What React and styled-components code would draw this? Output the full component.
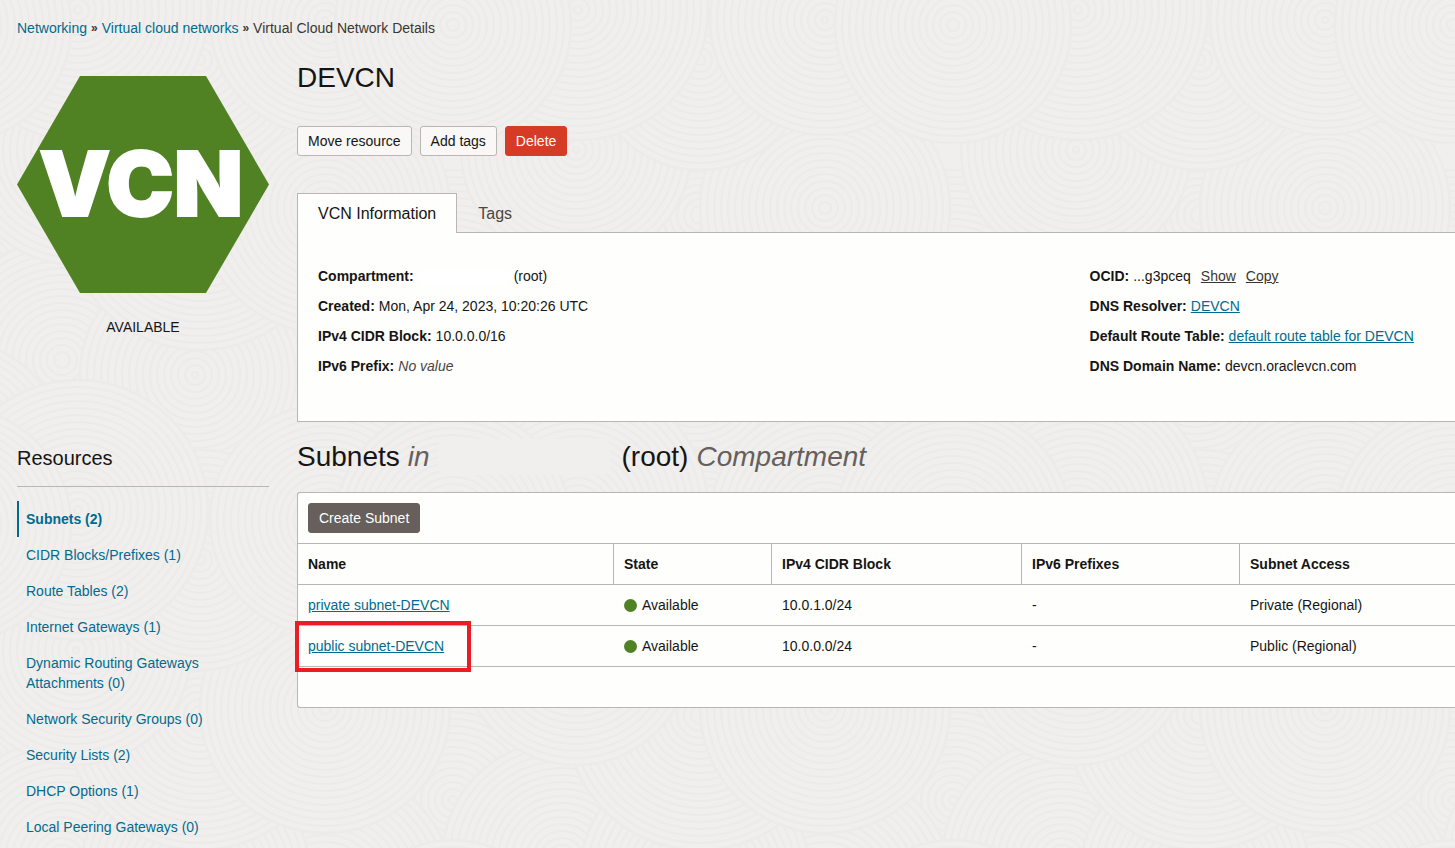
import React from 'react';
import styled, { createGlobalStyle } from 'styled-components';

const color = {
  page: '#f0efed',
  groove: '#ecebe9',
  panel: '#fefefc',
  line: '#bab6b1',
  text: '#161513',
  muted: '#665f5b',
  link: '#006b8f',
  green: '#508223',
};

/* Sand-garden texture: overlapping discs of concentric grooves, tiled every 500px. */
const TILE = 500;
const discs = [
  [453, 300, 130], [325, 395, 130], [62, 360, 120], [195, 375, 115],
  [453, 450, 110], [200, 215, 135], [325, 208, 125], [76, 150, 115],
  [200, 60, 110], [325, 20, 115], [78, 10, 130], [453, 25, 118],
];

function grooves([cx, cy, r]) {
  let out = '';
  for (const dx of [-TILE, 0, TILE]) {
    for (const dy of [-TILE, 0, TILE]) {
      const x = cx + dx;
      const y = cy + dy;
      if (x + r < 0 || x - r > TILE || y + r < 0 || y - r > TILE) continue;
      out += `<circle cx="${x}" cy="${y}" r="${r}" fill="${color.page}"/>`;
      for (let ring = r; ring > 2; ring -= 7) {
        out += `<circle cx="${x}" cy="${y}" r="${ring}"/>`;
      }
    }
  }
  return out;
}

const texture = `url("data:image/svg+xml,${encodeURIComponent(
  `<svg xmlns="http://www.w3.org/2000/svg" width="${TILE}" height="${TILE}"><g fill="none" stroke="${color.groove}" stroke-width="2">${discs
    .map(grooves)
    .join('')}</g></svg>`
).replace(/'/g, '%27')}")`;

const GlobalStyle = createGlobalStyle`
  *, *::before, *::after { box-sizing: border-box; }
  body {
    margin: 0;
    background-color: ${color.page};
    background-image: ${texture};
    color: ${color.text};
    font: 14px/20px "Liberation Sans", Arial, sans-serif;
  }
`;

const Page = styled.div`
  padding: 18px 0 0 17px;
`;

const Breadcrumb = styled.nav`
  display: flex;
  gap: 4px;
  color: #3a3632;
`;

const Crumb = styled.a`
  color: ${color.link};
  text-decoration: none;
`;

const Separator = styled.span`
  font-size: 12px;
  font-weight: bold;
`;

const Columns = styled.div`
  display: grid;
  grid-template-columns: 252px minmax(0, 1fr);
  column-gap: 28px;
  margin-top: ${(p) => p.$top}px;
`;

const Status = styled.aside`
  padding-top: 16px;
  text-align: center;
`;

const Hexagon = styled.svg`
  display: block;
  width: 100%;
  margin-bottom: 24px;
`;

const Title = styled.h1`
  margin: 0 0 30px;
  font-size: 28px;
  line-height: 36px;
  font-weight: normal;
`;

const Actions = styled.div`
  display: flex;
  gap: 8px;
`;

const looks = {
  plain: `background: #f9f8f7; color: ${color.text}; border-color: ${color.line};`,
  danger: 'background: #d63b25; color: #fff; border-color: #d63b25;',
  solid: `background: ${color.muted}; color: #fff; border-color: ${color.muted};`,
};

const Button = styled.button`
  height: 30px;
  padding: 0 10px;
  border: 1px solid;
  border-radius: 3px;
  font: inherit;
  ${(p) => looks[p.$look]}
`;

const TabBar = styled.div`
  display: flex;
  margin-top: 37px;
`;

const Tab = styled.button`
  height: 40px;
  margin-bottom: -1px;
  padding: 0 20px;
  border: 1px solid ${(p) => (p.$active ? color.line : 'transparent')};
  border-bottom: 0;
  background: ${(p) => (p.$active ? color.panel : 'transparent')};
  color: ${(p) => (p.$active ? color.text : '#4a4541')};
  font: inherit;
  font-size: 16px;
  position: relative;
`;

const InfoPanel = styled.section`
  display: grid;
  grid-template-columns: 19fr 9fr;
  padding: 28px 0 40px 20px;
  border: 1px solid ${color.line};
  border-right: 0;
  background: ${color.panel};
`;

const Fields = styled.dl`
  margin: 0;
  line-height: 30px;
`;

const Field = styled.div`
  display: flex;
  gap: 4px;
  white-space: nowrap;

  dt { font-weight: bold; }
  dd { margin: 0; }
`;

const Link = styled.a`
  color: ${(p) => (p.$quiet ? '#3a3632' : color.link)};
  text-decoration: underline;
  text-underline-offset: 1px;
  margin-left: ${(p) => (p.$quiet ? 10 : 0)}px;
`;

const NoValue = styled.em`
  color: #4a4541;
`;

const Redacted = styled.span`
  display: inline-block;
  width: ${(p) => p.$width}px;
  height: ${(p) => p.$height}px;
  margin-right: 4px;
  border-radius: 8px;
  background: ${(p) => p.$fill};
  vertical-align: middle;
`;

const SideHeading = styled.h2`
  margin: 0 0 14px;
  padding: 8px 0 14px;
  border-bottom: 1px solid ${color.line};
  font-size: 20px;
  line-height: 28px;
  font-weight: normal;
`;

const ResourceList = styled.ul`
  margin: 0;
  padding: 0;
  list-style: none;
`;

const ResourceLink = styled.a`
  display: block;
  padding: 8px 50px 8px 7px;
  border-left: 2px solid ${(p) => (p.$active ? color.link : 'transparent')};
  color: ${color.link};
  font-weight: ${(p) => (p.$active ? 'bold' : 'normal')};
  text-decoration: none;
`;

const SectionHeading = styled.h2`
  display: flex;
  align-items: center;
  gap: 8px;
  margin: 0;
  height: 56px;
  padding-bottom: 14px;
  font-size: 28px;
  line-height: 36px;
  font-weight: normal;
  white-space: nowrap;

  em { color: ${color.muted}; }
`;

const TablePanel = styled.section`
  border: 1px solid ${color.line};
  border-right: 0;
  border-radius: 3px 0 0 3px;
  background: ${color.panel};
  padding-bottom: 40px;
`;

const Toolbar = styled.div`
  padding: 10px;
  border-bottom: 1px solid ${color.line};
`;

const Table = styled.table`
  width: 100%;
  table-layout: fixed;
  border-collapse: separate;
  border-spacing: 0;
  text-align: left;
`;

const Column = styled.col`
  width: ${(p) => (p.$width ? `${p.$width}px` : 'auto')};
`;

const HeadCell = styled.th`
  height: 41px;
  padding: 0 10px;
  border-bottom: 1px solid ${color.line};

  & + & { border-left: 1px solid ${color.line}; }
`;

const Cell = styled.td`
  position: relative;
  height: 41px;
  padding: 0 10px;
  border-bottom: 1px solid ${color.line};

  & + & { padding-left: 11px; }
`;

const Highlight = styled.span`
  position: absolute;
  top: -5px;
  left: -3px;
  width: 176px;
  height: 51px;
  border: 4px solid #ed1c24;
  pointer-events: none;
`;

const State = styled.span`
  display: flex;
  align-items: center;
  gap: 5px;

  &::before {
    content: '';
    width: 13px;
    height: 13px;
    border-radius: 50%;
    background: ${color.green};
  }
`;

const resources = [
  'Subnets (2)',
  'CIDR Blocks/Prefixes (1)',
  'Route Tables (2)',
  'Internet Gateways (1)',
  'Dynamic Routing Gateways Attachments (0)',
  'Network Security Groups (0)',
  'Security Lists (2)',
  'DHCP Options (1)',
  'Local Peering Gateways (0)',
];

const headers = [
  ['Name', 315],
  ['State', 158],
  ['IPv4 CIDR Block', 250],
  ['IPv6 Prefixes', 218],
  ['Subnet Access', null],
];

const subnets = [
  { name: 'private subnet-DEVCN', cidr: '10.0.1.0/24', access: 'Private (Regional)' },
  { name: 'public subnet-DEVCN', cidr: '10.0.0.0/24', access: 'Public (Regional)', marked: true },
];

export default function App() {
  return (
    <Page>
      <GlobalStyle />
      <Breadcrumb aria-label="Breadcrumb">
        <Crumb href="#networking">Networking</Crumb>
        <Separator>»</Separator>
        <Crumb href="#vcns">Virtual cloud networks</Crumb>
        <Separator>»</Separator>
        <span>Virtual Cloud Network Details</span>
      </Breadcrumb>

      <Columns $top={22}>
        <Status>
          <Hexagon viewBox="0 0 252 217" role="img" aria-label="VCN">
            <path d="M63 0H189L252 108.500L189 217H63L0 108.500Z" fill={color.green} />
            <text
              x="124"
              y="140"
              textAnchor="middle"
              fill="#fff"
              stroke="#fff"
              strokeWidth="2"
              fontFamily="Inter, sans-serif"
              fontWeight="900"
              fontSize="90"
            >
              VCN
            </text>
          </Hexagon>
          AVAILABLE
        </Status>
        <main>
          <Title>DEVCN</Title>
          <Actions>
            <Button $look="plain">Move resource</Button>
            <Button $look="plain">Add tags</Button>
            <Button $look="danger">Delete</Button>
          </Actions>
          <TabBar role="tablist">
            <Tab role="tab" aria-selected="true" $active>VCN Information</Tab>
            <Tab role="tab" aria-selected="false">Tags</Tab>
          </TabBar>
          <InfoPanel>
            <Fields>
              <Field>
                <dt>Compartment:</dt>
                <dd><Redacted $width={92} $height={18} $fill="#ffffff" />(root)</dd>
              </Field>
              <Field><dt>Created:</dt><dd>Mon, Apr 24, 2023, 10:20:26 UTC</dd></Field>
              <Field><dt>IPv4 CIDR Block:</dt><dd>10.0.0.0/16</dd></Field>
              <Field><dt>IPv6 Prefix:</dt><dd><NoValue>No value</NoValue></dd></Field>
            </Fields>
            <Fields>
              <Field>
                <dt>OCID:</dt>
                <dd>
                  ...g3pceq
                  <Link href="#show" $quiet>Show</Link>
                  <Link href="#copy" $quiet>Copy</Link>
                </dd>
              </Field>
              <Field><dt>DNS Resolver:</dt><dd><Link href="#resolver">DEVCN</Link></dd></Field>
              <Field>
                <dt>Default Route Table:</dt>
                <dd><Link href="#route-table">default route table for DEVCN</Link></dd>
              </Field>
              <Field><dt>DNS Domain Name:</dt><dd>devcn.oraclevcn.com</dd></Field>
            </Fields>
          </InfoPanel>
        </main>
      </Columns>

      <Columns $top={14}>
        <nav aria-labelledby="resources">
          <SideHeading id="resources">Resources</SideHeading>
          <ResourceList>
            {resources.map((name, i) => (
              <li key={name}>
                <ResourceLink href="#resource" $active={i === 0}>{name}</ResourceLink>
              </li>
            ))}
          </ResourceList>
        </nav>
        <div>
          <SectionHeading>
            <span>Subnets</span>
            <em>in</em>
            <Redacted $width={172} $height={36} $fill={color.page} />
            <span>(root)</span>
            <em>Compartment</em>
          </SectionHeading>
          <TablePanel>
            <Toolbar><Button $look="solid">Create Subnet</Button></Toolbar>
            <Table>
              <colgroup>
                {headers.map(([name, width]) => <Column key={name} $width={width} />)}
              </colgroup>
              <thead>
                <tr>{headers.map(([name]) => <HeadCell key={name} scope="col">{name}</HeadCell>)}</tr>
              </thead>
              <tbody>
                {subnets.map((s) => (
                  <tr key={s.name}>
                    <Cell>
                      <Link href="#subnet">{s.name}</Link>
                      {s.marked && <Highlight />}
                    </Cell>
                    <Cell><State>Available</State></Cell>
                    <Cell>{s.cidr}</Cell>
                    <Cell>-</Cell>
                    <Cell>{s.access}</Cell>
                  </tr>
                ))}
              </tbody>
            </Table>
          </TablePanel>
        </div>
      </Columns>
    </Page>
  );
}
